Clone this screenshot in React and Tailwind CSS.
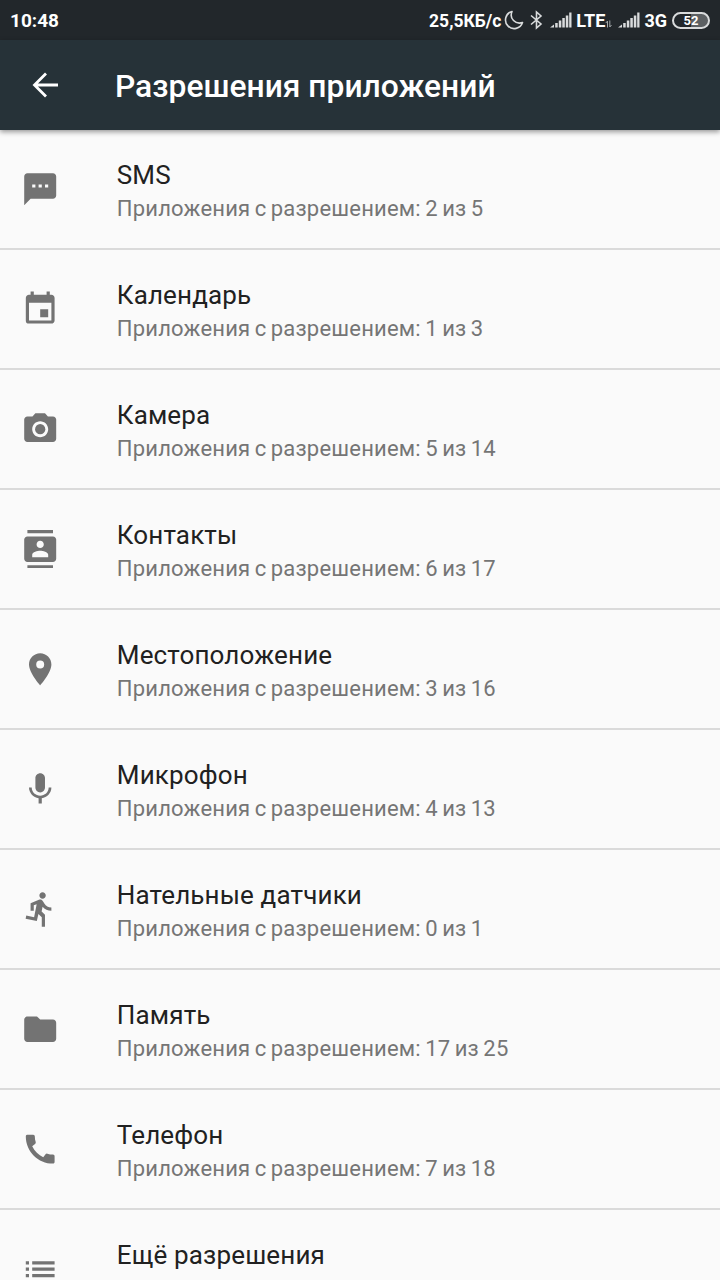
import {
  MdCall,
  MdCameraAlt,
  MdContacts,
  MdDirectionsRun,
  MdEvent,
  MdFolder,
  MdList,
  MdMic,
  MdPlace,
  MdSms,
} from 'react-icons/md';

const permissions = [
  { title: 'SMS', icon: MdSms, granted: 2, total: 5 },
  { title: 'Календарь', icon: MdEvent, granted: 1, total: 3 },
  { title: 'Камера', icon: MdCameraAlt, granted: 5, total: 14 },
  { title: 'Контакты', icon: MdContacts, granted: 6, total: 17 },
  { title: 'Местоположение', icon: MdPlace, granted: 3, total: 16 },
  { title: 'Микрофон', icon: MdMic, granted: 4, total: 13 },
  { title: 'Нательные датчики', icon: MdDirectionsRun, granted: 0, total: 1 },
  { title: 'Память', icon: MdFolder, granted: 17, total: 25 },
  { title: 'Телефон', icon: MdCall, granted: 7, total: 18 },
  { title: 'Ещё разрешения', icon: MdList },
];

function SignalBars() {
  return (
    <svg viewBox="0 0 22 16" className="h-4 w-[22px] shrink-0" fill="#d9dbdc">
      <path d="M0 15.500 4 12.500V15.500Z" />
      <rect x="5.200" y="11" width="2.500" height="4.500" />
      <rect x="8.800" y="8.500" width="2.500" height="7" />
      <rect x="12.300" y="6" width="2.500" height="9.500" />
      <rect x="15.800" y="3.500" width="2.500" height="12" />
      <rect x="19.200" y="0.500" width="2.300" height="15" />
    </svg>
  );
}

function StatusBar() {
  return (
    <div className="flex h-10 shrink-0 items-center justify-between bg-[#22272b] px-[10px] text-[18px] font-bold text-white">
      <span className="mt-0.5 text-[19px]">10:48</span>
      <div className="flex items-center">
        <span className="mt-0.5 text-[17.500px]">25,5КБ/с</span>
        <svg viewBox="0 0 20 20" className="ml-[3px] h-5 w-5" fill="none" stroke="#d9dbdc" strokeWidth="1.600" strokeLinejoin="round">
          <path d="M8 1.500A8.700 8.700 0 1 0 18.500 12.600C11.500 14.800 5 8.500 8 1.500Z" />
        </svg>
        <svg viewBox="0 0 13 20" className="ml-[6px] h-5 w-[13px]" fill="none" stroke="#d9dbdc" strokeWidth="1.600">
          <path d="M1 5.500 11 14 6.500 18V2L11 6 1 14.500" />
        </svg>
        <div className="ml-[7px] flex">
          <SignalBars />
        </div>
        <span className="ml-[4px]">LTE</span>
        <svg viewBox="0 0 7 8" className="mt-2 h-2 w-[7px]" fill="none" stroke="#a4a8aa" strokeWidth="1">
          <path d="M2.500 7.500V1L0.800 3M4.800 0.500V7L6.500 5" />
        </svg>
        <div className="ml-[6px] flex">
          <SignalBars />
        </div>
        <span className="ml-1">3G</span>
        <div className="ml-[5px] flex h-[17px] w-[38px] items-center justify-center rounded-full border-2 border-[#d9dbdc] bg-linear-to-r from-[#22272b] from-50% to-[#5c6063] to-50% text-[13px] leading-none">
          52
        </div>
      </div>
    </div>
  );
}

function PermissionRow({ title, icon: Icon, granted, total }) {
  return (
    <li className="flex h-[120px] shrink-0 items-center border-b-2 border-[#dadada] pl-[21px]">
      <Icon className="h-[38.4px] w-[38.4px] shrink-0 text-[#737373]" />
      <div className="ml-[57.400px] min-h-[70px] pt-1">
        <h2 className="text-[26px] leading-[34px] tracking-[0.150px] text-[#212121]">{title}</h2>
        {total !== undefined && (
          <p className="pt-px text-[22px] leading-[31px] tracking-[0.200px] text-[#757575] [word-spacing:-1.3px]">
            Приложения с разрешением: {granted} из {total}
          </p>
        )}
      </div>
    </li>
  );
}

export default function App() {
  return (
    <div className="flex h-[1280px] w-[720px] flex-col overflow-hidden bg-[#fafafa] font-[Roboto,sans-serif]">
      <StatusBar />
      <header className="relative flex h-[90px] shrink-0 items-center bg-[#263238] pl-[26px] text-white shadow-[0_2px_5px_rgba(0,0,0,0.4)]">
        <svg viewBox="0 0 38 38" className="h-[38px] w-[38px]" fill="none" stroke="currentColor" strokeWidth="2.800">
          <path d="M32 19H8.500M20 7.500 8.500 19 20 30.500" />
        </svg>
        <h1 className="mt-[3px] ml-[51px] text-[31.800px] font-medium">Разрешения приложений</h1>
      </header>
      <ul className="flex flex-col">
        {permissions.map((permission) => (
          <PermissionRow key={permission.title} {...permission} />
        ))}
      </ul>
    </div>
  );
}
